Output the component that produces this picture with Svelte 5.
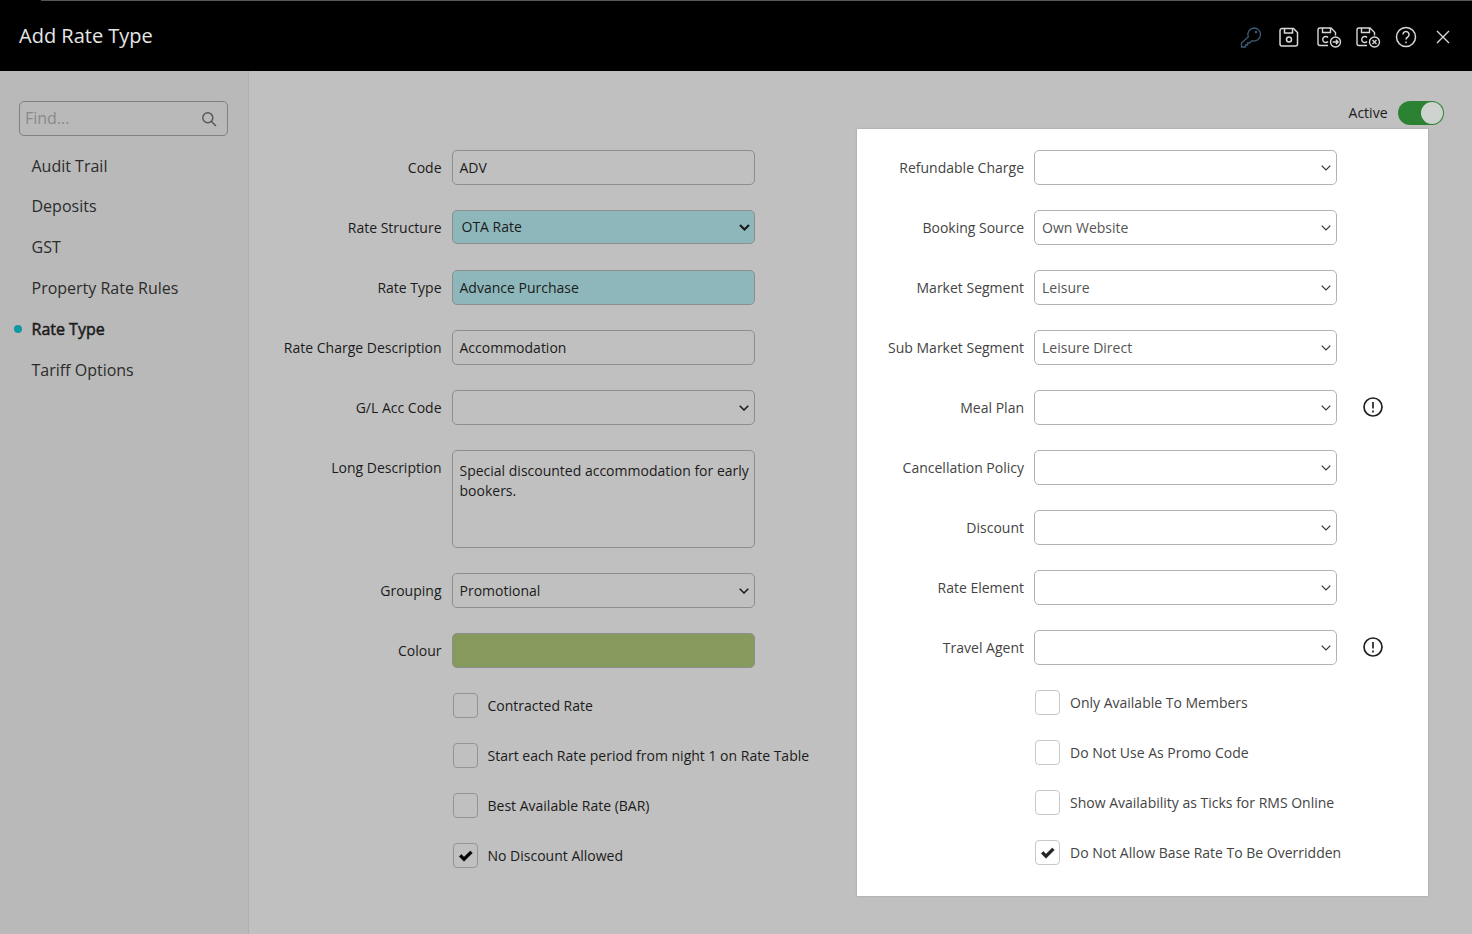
<script>
    const nav = ["Audit Trail", "Deposits", "GST", "Property Rate Rules", "Rate Type", "Tariff Options"];
    const activeNav = "Rate Type";

    const leftChecks = [
        { label: "Contracted Rate", checked: false },
        { label: "Start each Rate period from night 1 on Rate Table", checked: false },
        { label: "Best Available Rate (BAR)", checked: false },
        { label: "No Discount Allowed", checked: true }
    ];

    const rightSelects = [
        { label: "Refundable Charge", value: "" },
        { label: "Booking Source", value: "Own Website" },
        { label: "Market Segment", value: "Leisure" },
        { label: "Sub Market Segment", value: "Leisure Direct" },
        { label: "Meal Plan", value: "", info: true },
        { label: "Cancellation Policy", value: "" },
        { label: "Discount", value: "" },
        { label: "Rate Element", value: "" },
        { label: "Travel Agent", value: "", info: true }
    ];

    const rightChecks = [
        { label: "Only Available To Members", checked: false },
        { label: "Do Not Use As Promo Code", checked: false },
        { label: "Show Availability as Ticks for RMS Online", checked: false },
        { label: "Do Not Allow Base Rate To Be Overridden", checked: true }
    ];
</script>

<div class="page">
    <header class="topbar">
        <h1>Add Rate Type</h1>
        <div class="actions">
            <svg class="ic key" width="24" height="24" viewBox="0 0 24 24" fill="none" stroke="currentColor" stroke-width="1.3">
                <path d="M15 3a6.500 6.500 0 0 1 6.500 6.500 6.500 6.500 0 0 1-8.500 6.200L10.500 18H8.500v2H6.500v2h-4v-4l6.800-6.200A6.500 6.500 0 0 1 15 3z"/>
                <circle cx="17" cy="7" r=".7" fill="currentColor"/>
            </svg>
            <svg class="ic save" width="24" height="24" viewBox="0 0 24 24" fill="none" stroke="currentColor" stroke-width="1.5">
                <path d="M5 3.500h11.500l4 4V19a2 2 0 0 1-2 2H5a2 2 0 0 1-2-2V5.500a2 2 0 0 1 2-2z"/>
                <path d="M7.500 3.500v4.500h8V3.500"/>
                <circle cx="12" cy="14.500" r="2.500"/>
            </svg>
            <svg class="ic" width="26" height="24" viewBox="0 0 26 24" fill="none" stroke="currentColor" stroke-width="1.4">
                <path d="M12 20.500H4a2 2 0 0 1-2-2V5a2 2 0 0 1 2-2h11l4.500 4.500v3"/>
                <path d="M6.500 3v4.500h8V3"/>
                <path d="M12 12.500a3 3 0 1 0 0 4"/>
                <circle cx="19.500" cy="17" r="5"/>
                <path d="M16.700 17h5.400M19.900 14.800l2.200 2.200-2.200 2.200"/>
            </svg>
            <svg class="ic" width="26" height="24" viewBox="0 0 26 24" fill="none" stroke="currentColor" stroke-width="1.4">
                <path d="M12 20.500H4a2 2 0 0 1-2-2V5a2 2 0 0 1 2-2h11l4.500 4.500v3"/>
                <path d="M6.500 3v4.500h8V3"/>
                <path d="M12 12.500a3 3 0 1 0 0 4"/>
                <circle cx="19.500" cy="17" r="5"/>
                <path d="M17.500 15l4 4M21.500 15l-4 4"/>
            </svg>
            <svg class="ic" width="24" height="24" viewBox="0 0 24 24" fill="none" stroke="currentColor" stroke-width="1.5">
                <circle cx="12" cy="12" r="9.500"/>
                <path d="M9 9.500a3 3 0 1 1 4.700 2.500c-1.100.7-1.700 1.300-1.700 2.500"/>
                <path d="M12 16.500v1.700"/>
            </svg>
            <svg class="ic close" width="16" height="16" viewBox="0 0 16 16" fill="none" stroke="currentColor" stroke-width="1.4">
                <path d="M2 2l12 12M14 2L2 14"/>
            </svg>
        </div>
    </header>

    <div class="body">
        <aside class="sidebar">
            <div class="find">
                <span class="find-text">Find...</span>
                <svg width="16" height="16" viewBox="0 0 16 16" fill="none" stroke="#555" stroke-width="1.4">
                    <circle cx="6.800" cy="6.800" r="5"/>
                    <path d="M10.500 10.500l4.500 4.500"/>
                </svg>
            </div>
            <nav>
                {#each nav as item}
                    <div class="nav-item" class:active={item === activeNav}>{item}</div>
                {/each}
            </nav>
        </aside>

        <main class="content">
            <div class="form-left">
                <div class="row">
                    <div class="label">Code</div>
                    <div class="field">ADV</div>
                </div>
                <div class="row">
                    <div class="label">Rate Structure</div>
                    <div class="field pick teal struct">
                        OTA Rate
                        <svg class="chev" width="11" height="7" viewBox="0 0 11 7" fill="none" stroke="currentColor" stroke-width="2.2"><path d="M1 1l4.500 4.500L10 1"/></svg>
                    </div>
                </div>
                <div class="row">
                    <div class="label">Rate Type</div>
                    <div class="field teal">Advance Purchase</div>
                </div>
                <div class="row">
                    <div class="label">Rate Charge Description</div>
                    <div class="field">Accommodation</div>
                </div>
                <div class="row">
                    <div class="label">G/L Acc Code</div>
                    <div class="field pick">
                        <svg class="chev" width="10" height="6" viewBox="0 0 10 6" fill="none" stroke="currentColor" stroke-width="1.5"><path d="M.7.7L5 5l4.300-4.300"/></svg>
                    </div>
                </div>
                <div class="row row-tall">
                    <div class="label">Long Description</div>
                    <div class="field area">Special discounted accommodation for early bookers.</div>
                </div>
                <div class="row">
                    <div class="label">Grouping</div>
                    <div class="field pick">
                        Promotional
                        <svg class="chev" width="10" height="6" viewBox="0 0 10 6" fill="none" stroke="currentColor" stroke-width="1.5"><path d="M.7.7L5 5l4.300-4.300"/></svg>
                    </div>
                </div>
                <div class="row colour-row">
                    <div class="label">Colour</div>
                    <div class="swatch"></div>
                </div>
                {#each leftChecks as c}
                    <div class="check-row">
                        <span class="box">
                            {#if c.checked}
                                <svg width="15" height="12" viewBox="0 0 15 12"><path d="M1.300 6.500l2-2 2.700 2.700L12.300 1l2 2L6 11.300z" fill="currentColor" stroke="currentColor" stroke-width=".6"/></svg>
                            {/if}
                        </span>
                        <span>{c.label}</span>
                    </div>
                {/each}
            </div>

            <div class="form-right">
                <div class="active-row">
                    <span>Active</span>
                    <span class="toggle"><span class="knob"></span></span>
                </div>
                <div class="card">
                    {#each rightSelects as s}
                        <div class="row">
                            <div class="label">{s.label}</div>
                            <div class="field pick">
                                {s.value}
                                <svg class="chev" width="10" height="6" viewBox="0 0 10 6" fill="none" stroke="currentColor" stroke-width="1.2"><path d="M.7.7L5 5l4.300-4.300"/></svg>
                            </div>
                            {#if s.info}
                                <svg class="info" width="22" height="22" viewBox="0 0 22 22" fill="none" stroke="#222" stroke-width="1.700">
                                    <circle cx="11" cy="11" r="9"/>
                                    <path d="M11 6v6.500M11 14.500v2"/>
                                </svg>
                            {/if}
                        </div>
                    {/each}
                    <div class="checks">
                        {#each rightChecks as c}
                            <div class="check-row">
                                <span class="box">
                                    {#if c.checked}
                                        <svg width="15" height="12" viewBox="0 0 15 12"><path d="M1.300 6.500l2-2 2.700 2.700L12.300 1l2 2L6 11.300z" fill="currentColor" stroke="currentColor" stroke-width=".6"/></svg>
                                    {/if}
                                </span>
                                <span>{c.label}</span>
                            </div>
                        {/each}
                    </div>
                </div>
            </div>
        </main>
    </div>
</div>

<style>
    :global(body) {
        margin: 0;
        font-family: "Open Sans", "Liberation Sans", sans-serif;
        background: #c0c0c0;
    }

    .page {
        width: 1472px;
        height: 934px;
        display: flex;
        flex-direction: column;
        overflow: hidden;
        color: #1b1b1b;
        font-size: 14px;
    }

    .topbar {
        height: 71px;
        flex: none;
        box-sizing: border-box;
        background: linear-gradient(90deg, #000 41px, #555 41px) top / 100% 1px no-repeat, #000;
        display: flex;
        align-items: center;
        justify-content: space-between;
        padding: 0 21px 0 19px;
    }

    h1 {
        margin: 0;
        font-size: 20px;
        font-weight: 400;
        color: #e6e6e6;
    }

    .actions {
        display: flex;
        align-items: center;
        gap: 13px;
        color: #d8d8d8;
        margin-top: 3px;
    }

    .ic.key {
        color: #3c5a75;
        margin-right: 1px;
    }

    .ic.save {
        margin-right: 2px;
    }

    .ic.close {
        margin-left: 4px;
    }

    .body {
        flex: 1;
        display: flex;
    }

    .sidebar {
        width: 249px;
        flex: none;
        box-sizing: border-box;
        background: #b9b9b9;
        border-right: 1px solid #b0b0b0;
        padding: 30px 20px 0 19px;
    }

    .find {
        height: 35px;
        box-sizing: border-box;
        border: 1px solid #808080;
        border-radius: 5px;
        display: flex;
        align-items: center;
        justify-content: space-between;
        padding: 0 10px 2px 5px;
        font-size: 16px;
        color: #8a8a8a;
    }

    .find svg {
        margin-top: 2px;
    }

    nav {
        margin-top: 9.300px;
    }

    .nav-item {
        position: relative;
        height: 40.800px;
        display: flex;
        align-items: center;
        padding-left: 12.500px;
        font-size: 16px;
        color: #2c2c2c;
    }

    .nav-item.active {
        color: #1b1b1b;
        -webkit-text-stroke: 0.5px #1b1b1b;
    }

    .nav-item.active::before {
        content: "";
        position: absolute;
        left: -5px;
        top: 17px;
        width: 8px;
        height: 8px;
        border-radius: 50%;
        background: #0f97a2;
    }

    .content {
        flex: 1;
        display: flex;
        align-items: flex-start;
    }

    .form-left {
        width: 608px;
        flex: none;
        padding-top: 79px;
    }

    .row {
        display: flex;
        min-height: 35px;
        margin-bottom: 25px;
    }

    .label {
        width: 192.500px;
        flex: none;
        text-align: right;
        margin-right: 10.500px;
        line-height: 35px;
    }

    .field,
    .swatch {
        width: 303px;
        height: 35px;
        flex: none;
        box-sizing: border-box;
        border: 1px solid #8e8e8e;
        border-radius: 5px;
    }

    .field {
        padding: 0 6.500px;
        line-height: 33px;
    }

    .field.pick {
        position: relative;
    }

    .chev {
        position: absolute;
        right: 5px;
        top: 14px;
    }

    .teal {
        background: #8eb7bb;
    }

    .field.struct {
        height: 34px;
        padding-left: 8.500px;
        line-height: 31px;
    }

    .struct .chev {
        right: 4px;
        top: 13px;
    }

    .area {
        height: 98px;
        padding: 10px 2px 0 6.500px;
        line-height: 20px;
    }

    .swatch {
        background: #879a5e;
    }

    .check-row {
        display: flex;
        align-items: center;
        height: 25px;
        margin-bottom: 25px;
        margin-left: 204px;
        gap: 9.500px;
    }

    .box {
        width: 25px;
        height: 25px;
        flex: none;
        box-sizing: border-box;
        border: 1px solid #949494;
        border-radius: 4px;
        display: flex;
        align-items: center;
        justify-content: center;
        color: #000;
    }

    .form-right {
        width: 571px;
        flex: none;
    }

    .active-row {
        height: 58px;
        display: flex;
        align-items: flex-start;
        justify-content: flex-end;
        gap: 10.500px;
        margin-right: -16px;
        padding-top: 30px;
        box-sizing: border-box;
        line-height: 24px;
    }

    .toggle {
        width: 46px;
        height: 24px;
        box-sizing: border-box;
        border-radius: 12px;
        background: #2b8232;
        display: flex;
        justify-content: flex-end;
        padding: 1px;
    }

    .knob {
        width: 22px;
        height: 22px;
        border-radius: 50%;
        background: #cfd3cf;
    }

    .card {
        background: #fff;
        height: 767px;
        box-sizing: border-box;
        padding-top: 21px;
        color: #444;
        box-shadow: 0 0 2px rgba(0, 0, 0, 0.2);
    }

    .card .label {
        width: 167px;
        margin-right: 10px;
    }

    .card .field {
        border-color: #b3b3b3;
        padding: 0 7px;
        color: #555;
    }

    .card .chev {
        color: #333;
    }

    .info {
        margin: 6px 0 0 25px;
    }

    .card .check-row {
        margin-left: 178px;
        gap: 10px;
    }

    .card .box {
        border-color: #c8c8c8;
        color: #222;
    }
</style>
